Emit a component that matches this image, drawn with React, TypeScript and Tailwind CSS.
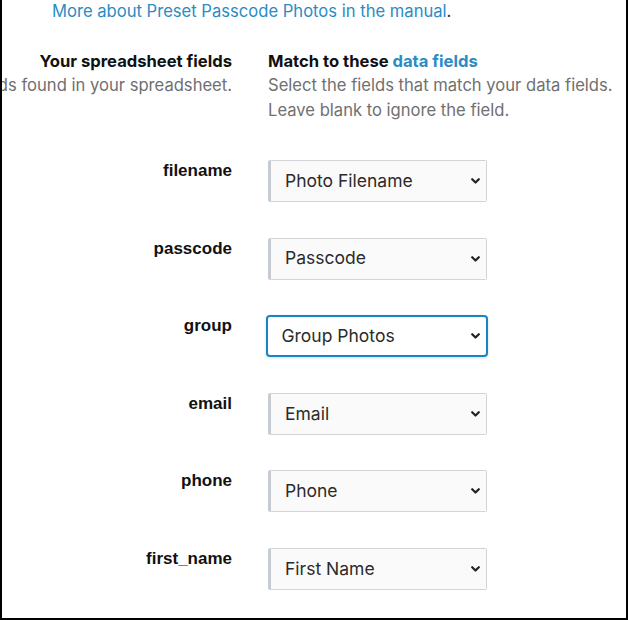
import React from "react";

const rows: { label: string; value: string; focused?: boolean }[] = [
  { label: "filename", value: "Photo Filename" },
  { label: "passcode", value: "Passcode" },
  { label: "group", value: "Group Photos", focused: true },
  { label: "email", value: "Email" },
  { label: "phone", value: "Phone" },
  { label: "first_name", value: "First Name" },
];

function Chevron() {
  return (
    <svg
      className="pointer-events-none absolute right-[6px] top-1/2 -translate-y-1/2"
      width="9"
      height="6"
      viewBox="0 0 9 6"
      fill="none"
    >
      <path d="M1.2 1.2 L4.5 4.5 L7.8 1.2" stroke="#222" strokeWidth="2.2" strokeLinecap="round" strokeLinejoin="round" />
    </svg>
  );
}

export default function App() {
  const inter = { fontFamily: "Inter, 'Noto Sans', sans-serif" };
  return (
    <div
      className="w-[628px] h-[620px] overflow-hidden bg-white border-l-2 border-r-2 border-b-2 border-black text-[16.6px]"
      style={inter}
    >
      <p className="pl-[50px] pt-[1px] leading-[20px] text-[#2a8cc4] whitespace-nowrap">
        More about Preset Passcode Photos in the manual<span className="text-[#333]">.</span>
      </p>

      <div className="mt-[28px] flex gap-[36px]">
        <div className="w-[230px] shrink-0 flex flex-col items-end">
          <div className="leading-[24px] font-bold text-[#111] whitespace-nowrap">Your spreadsheet fields</div>
          <div className="leading-[25px] text-[#707070] whitespace-nowrap">
            These are the fields found in your spreadsheet.
          </div>
        </div>
        <div className="flex flex-col">
          <div className="leading-[24px] font-bold text-[#111] whitespace-nowrap">
            Match to these <span className="text-[#2a8cc4]">data fields</span>
          </div>
          <div className="leading-[25px] text-[#707070] whitespace-nowrap">
            Select the fields that match your data fields.
          </div>
          <div className="leading-[25px] text-[#707070] whitespace-nowrap">Leave blank to ignore the field.</div>
        </div>
      </div>

      <div className="mt-[37px] flex flex-col gap-[35.6px]">
        {rows.map((r) => (
          <div key={r.label} className="flex gap-[36px] h-[42px]">
            <div
              className="w-[230px] shrink-0 text-right font-bold text-[17px] text-[#111] leading-[20px] pt-[1px]"
              style={{ fontFamily: "'Liberation Sans', Arial, sans-serif" }}
            >
              {r.label}
            </div>
            {r.focused ? (
              <div className="relative -ml-[2px] w-[222px] h-[42px] rounded-[4px] border-[2.5px] border-[#1784c7] bg-white shadow-[0_1px_3px_rgba(0,0,0,0.15)]">
                <select
                  defaultValue={r.value}
                  className="appearance-none w-full h-full bg-transparent pl-[13.5px] pr-6 text-[17.5px] text-[#2b2b2b] outline-none"
                  style={inter}
                >
                  <option>{r.value}</option>
                </select>
                <Chevron />
              </div>
            ) : (
              <div className="relative w-[219px] h-[42px] rounded-[2px] border border-[#d2d4d6] border-l-[3px] border-l-[#c7ccd2] bg-[#fafafa]">
                <select
                  defaultValue={r.value}
                  className="appearance-none w-full h-full bg-transparent pl-[14px] pr-6 text-[17.5px] text-[#2b2b2b] outline-none"
                  style={inter}
                >
                  <option>{r.value}</option>
                </select>
                <Chevron />
              </div>
            )}
          </div>
        ))}
      </div>
    </div>
  );
}
